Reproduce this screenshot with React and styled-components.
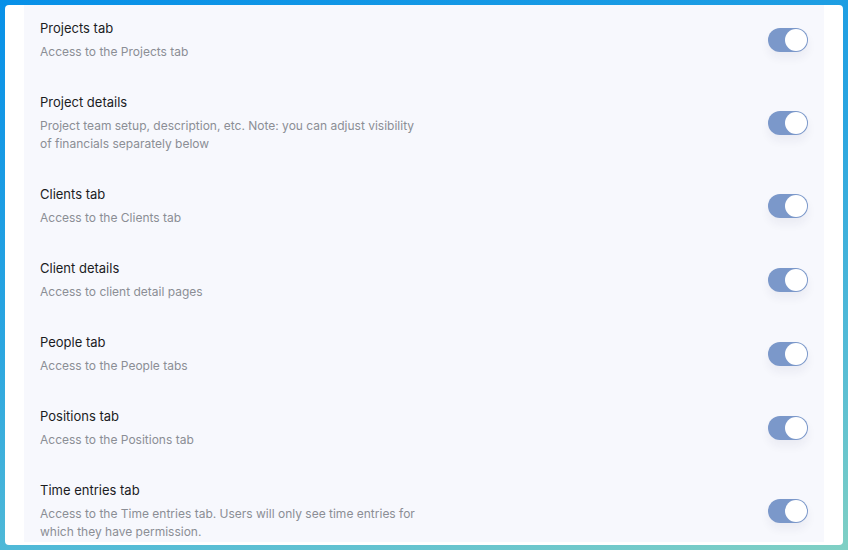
import styled, { createGlobalStyle } from "styled-components";

const permissions = [
  { title: "Projects tab", text: "Access to the Projects tab" },
  {
    title: "Project details",
    text: "Project team setup, description, etc. Note: you can adjust visibility of financials separately below",
  },
  { title: "Clients tab", text: "Access to the Clients tab" },
  { title: "Client details", text: "Access to client detail pages" },
  { title: "People tab", text: "Access to the People tabs" },
  { title: "Positions tab", text: "Access to the Positions tab" },
  {
    title: "Time entries tab",
    text: "Access to the Time entries tab. Users will only see time entries for which they have permission.",
  },
];

const GlobalStyle = createGlobalStyle`
  html, body {
    margin: 0;
    height: 100%;
  }
  body {
    font-family: Inter, "Noto Sans", sans-serif;
    background: linear-gradient(165deg, #0790e8 0%, #2ba6e0 45%, #55bcd6 75%, #80d0c4 100%);
    overflow: hidden;
  }
`;

const Page = styled.div`
  height: 550px;
  padding: 5px;
  box-sizing: border-box;
`;

const Card = styled.div`
  height: 100%;
  background: #fff;
  border-radius: 4px;
  padding: 0 19px;
  overflow: hidden;
`;

const Panel = styled.div`
  background: #f7f8fd;
  height: 100%;
  margin-top: -3px;
`;

const Row = styled.div`
  display: flex;
  align-items: center;
  justify-content: space-between;
  padding: 16px 16px 15px;
`;

const Info = styled.div`
  display: flex;
  flex-direction: column;
  gap: 5px;
`;

const Title = styled.div`
  font-size: 13px;
  line-height: 20px;
  color: #1b1c1f;
`;

const Description = styled.div`
  font-size: 12px;
  line-height: 18px;
  color: #8b8e95;
  max-width: 380px;
`;

const Toggle = styled.div`
  width: 40px;
  height: 24px;
  border-radius: 12px;
  background: #7b98ca;
  display: flex;
  align-items: center;
  justify-content: ${(p) => (p.$on ? "flex-end" : "flex-start")};
  padding: 1px;
  box-sizing: border-box;
  flex-shrink: 0;
  box-shadow: 0 6px 10px rgba(30, 40, 80, 0.06);
`;

const Knob = styled.div`
  width: 22px;
  height: 22px;
  border-radius: 50%;
  background: #fff;
`;

export default function App() {
  return (
    <>
      <GlobalStyle />
      <Page>
        <Card>
          <Panel>
            {permissions.map((p) => (
              <Row key={p.title}>
                <Info>
                  <Title>{p.title}</Title>
                  <Description>{p.text}</Description>
                </Info>
                <Toggle $on>
                  <Knob />
                </Toggle>
              </Row>
            ))}
          </Panel>
        </Card>
      </Page>
    </>
  );
}
